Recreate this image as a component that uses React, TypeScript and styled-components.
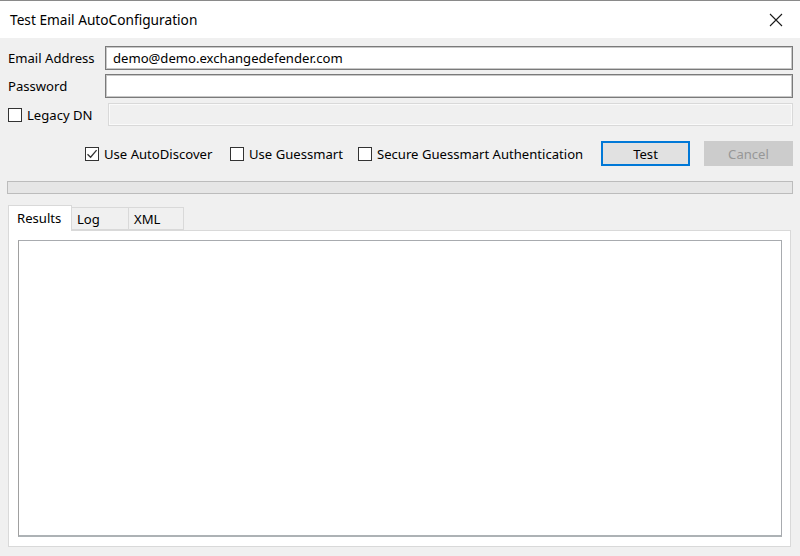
import React from "react";
import styled, { createGlobalStyle } from "styled-components";

const GlobalStyle = createGlobalStyle`
  html, body {
    margin: 0;
    padding: 0;
    background: #f0f0f0;
  }
  * {
    box-sizing: border-box;
  }
`;

const FONT = `"Noto Sans", "Open Sans", "Liberation Sans", sans-serif`;

const Window = styled.div`
  width: 800px;
  height: 556px;
  display: flex;
  flex-direction: column;
  border-top: 1px solid #8a8a8a;
  background: #f0f0f0;
  font-family: ${FONT};
  font-size: 13.1px;
  color: #000;
  overflow: hidden;
`;

const TitleBar = styled.div`
  height: 37px;
  flex: none;
  background: #fff;
  display: flex;
  align-items: center;
  justify-content: space-between;
  padding: 0 16px 0 10px;
`;

const Title = styled.span`
  font-size: 13.7px;
  color: #000;
`;

const CloseButton = styled.div`
  width: 16px;
  height: 16px;
  display: flex;
  align-items: center;
  justify-content: center;
  svg {
    stroke: #1a1a1a;
  }
`;

const Body = styled.div`
  flex: 1;
  display: flex;
  flex-direction: column;
  padding: 8px 7px 9px 8px;
`;

const FieldRow = styled.div<{ $gap: number }>`
  display: flex;
  align-items: center;
  margin-top: ${(p) => p.$gap}px;
`;

const FieldLabel = styled.label<{ $width: number }>`
  width: ${(p) => p.$width}px;
  flex: none;
  display: flex;
  align-items: center;
  white-space: nowrap;
`;

const TextBox = styled.div<{ $disabled?: boolean }>`
  flex: 1;
  height: ${(p) => (p.$disabled ? 23 : 24)}px;
  background: ${(p) => (p.$disabled ? "#f0f0f0" : "#fff")};
  border: ${(p) => (p.$disabled ? "1px solid #d9d9d9" : "1px solid #7a7a7a")};
  box-shadow: ${(p) => (p.$disabled ? "inset 0 0 0 1px #fafafa" : "inset 0 0 0 1px #c8c8c8")};
  display: flex;
  align-items: center;
  padding: 0 7px;
  white-space: nowrap;
`;

const OptionsRow = styled.div`
  display: flex;
  align-items: center;
  margin-top: 15px;
  padding-left: 77px;
  height: 25px;
`;

const Option = styled.label<{ $width?: number }>`
  display: flex;
  align-items: center;
  white-space: nowrap;
  width: ${(p) => (p.$width ? `${p.$width}px` : "auto")};
  flex: none;
`;

const Box = styled.span`
  width: 14px;
  height: 14px;
  border: 1px solid #333;
  background: #fff;
  flex: none;
  margin-right: 5px;
  display: flex;
  align-items: center;
  justify-content: center;
`;

const Button = styled.div<{ $primary?: boolean; $disabled?: boolean }>`
  width: 89px;
  height: 25px;
  display: flex;
  align-items: center;
  justify-content: center;
  background: ${(p) => (p.$disabled ? "#cccccc" : "#e1e1e1")};
  border: ${(p) => (p.$primary ? "2px solid #0078d7" : "1px solid #cccccc")};
  color: ${(p) => (p.$disabled ? "#979797" : "#000")};
  flex: none;
`;

const Spacer = styled.div`
  flex: 1;
`;

const Progress = styled.div`
  margin-top: 15px;
  margin-left: -1px;
  height: 13px;
  background: #e6e6e6;
  border: 1px solid #bcbcbc;
`;

const TabStrip = styled.div`
  display: flex;
  align-items: flex-end;
  margin-top: 10px;
  height: 26px;
  position: relative;
  z-index: 1;
`;

const Tab = styled.div<{ $active?: boolean; $width: number }>`
  width: ${(p) => p.$width}px;
  height: ${(p) => (p.$active ? 26 : 23)}px;
  display: flex;
  align-items: center;
  padding-left: ${(p) => (p.$active ? 8 : 5)}px;
  padding-bottom: ${(p) => (p.$active ? 2 : 0)}px;
  background: ${(p) => (p.$active ? "#fff" : "#f0f0f0")};
  border: 1px solid #d9d9d9;
  border-bottom: ${(p) => (p.$active ? "none" : "1px solid #d9d9d9")};
  margin-right: -1px;
  margin-bottom: ${(p) => (p.$active ? -1 : 0)}px;
`;

const TabPanel = styled.div`
  flex: 1;
  margin-right: 2px;
  background: #fff;
  border: 1px solid #d9d9d9;
  padding: 9px 8px 9px 9px;
  display: flex;
`;

const ResultsList = styled.div`
  flex: 1;
  background: #fff;
  border: 1px solid #a0a0a0;
  border-top-color: #a8abaf;
  border-right-color: #a8abaf;
  border-bottom: 2px solid #adb2b5;
`;

const Check = () => (
  <svg width="12" height="12" viewBox="0 0 12 12" fill="none">
    <path d="M1.5 6.2 L4.6 9.2 L10.6 2.2" stroke="#333" strokeWidth="1.3" />
  </svg>
);

const CheckBox = ({ checked }: { checked?: boolean }) => <Box>{checked && <Check />}</Box>;

const App = () => {
  return (
    <>
      <GlobalStyle />
      <Window>
        <TitleBar>
          <Title>Test Email AutoConfiguration</Title>
          <CloseButton>
            <svg width="14" height="14" viewBox="0 0 14 14" fill="none">
              <path d="M1 1 L13 13 M13 1 L1 13" strokeWidth="1.1" />
            </svg>
          </CloseButton>
        </TitleBar>
        <Body>
          <FieldRow $gap={0}>
            <FieldLabel $width={97}>Email Address</FieldLabel>
            <TextBox>demo@demo.exchangedefender.com</TextBox>
          </FieldRow>
          <FieldRow $gap={4}>
            <FieldLabel $width={97}>Password</FieldLabel>
            <TextBox />
          </FieldRow>
          <FieldRow $gap={5}>
            <FieldLabel $width={100}>
              <CheckBox />
              Legacy DN
            </FieldLabel>
            <TextBox $disabled />
          </FieldRow>
          <OptionsRow>
            <Option $width={145}>
              <CheckBox checked />
              Use AutoDiscover
            </Option>
            <Option $width={128}>
              <CheckBox />
              Use Guessmart
            </Option>
            <Option>
              <CheckBox />
              Secure Guessmart Authentication
            </Option>
            <Spacer />
            <Button $primary>Test</Button>
            <Button $disabled style={{ marginLeft: 14 }}>
              Cancel
            </Button>
          </OptionsRow>
          <Progress />
          <TabStrip>
            <Tab $active $width={64}>Results</Tab>
            <Tab $width={58}>Log</Tab>
            <Tab $width={56}>XML</Tab>
          </TabStrip>
          <TabPanel>
            <ResultsList />
          </TabPanel>
        </Body>
      </Window>
    </>
  );
};

export default App;
